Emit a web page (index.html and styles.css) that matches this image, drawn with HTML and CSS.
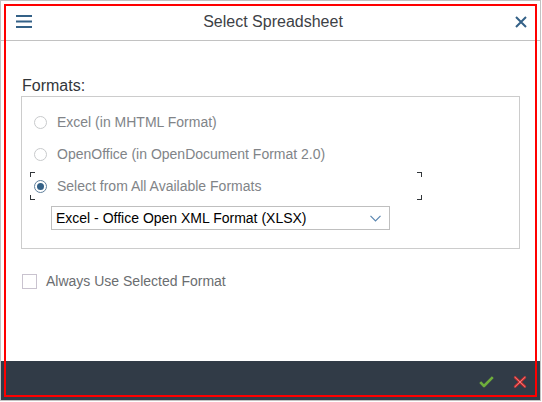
FILE: index.html
```html
<!DOCTYPE html>
<html>
<head>
<meta charset="utf-8">
<link rel="stylesheet" href="styles.css">
</head>
<body>
<div class="dialog">
  <header class="head">
    <button class="icon-btn menu" aria-label="Menu">
      <svg width="16" height="14" viewBox="0 0 16 14"><rect x="0" y="1" width="16" height="2" fill="#346187"/><rect x="0" y="6.5" width="16" height="2" fill="#346187"/><rect x="0" y="12" width="16" height="2" fill="#346187"/></svg>
    </button>
    <h1 class="title">Select Spreadsheet</h1>
    <button class="icon-btn close" aria-label="Close">
      <svg width="12" height="12" viewBox="0 0 12 12"><path d="M1 1L11 11M11 1L1 11" stroke="#346187" stroke-width="2" fill="none"/></svg>
    </button>
  </header>
  <main class="content">
    <div class="label">Formats:</div>
    <div class="group">
      <label class="opt"><span class="radio"></span><span class="opt-text">Excel (in MHTML Format)</span></label>
      <label class="opt"><span class="radio"></span><span class="opt-text">OpenOffice (in OpenDocument Format 2.0)</span></label>
      <label class="opt focus"><span class="radio checked"></span><span class="opt-text">Select from All Available Formats</span></label>
      <div class="select">
        <span class="select-text">Excel - Office Open XML Format (XLSX)</span>
        <svg class="chev" width="11" height="7" viewBox="0 0 11 7"><path d="M0.5 0.8L5.5 5.8L10.5 0.8" stroke="#5a86b0" stroke-width="1.2" fill="none"/></svg>
      </div>
    </div>
    <label class="check"><span class="box"></span><span class="check-text">Always Use Selected Format</span></label>
  </main>
  <footer class="foot">
    <button class="icon-btn ok" aria-label="OK">
      <svg width="15" height="12" viewBox="0 0 15 12"><path d="M1.2 6.2L5 10L13.8 1.2" stroke="#6fae3c" stroke-width="2.6" fill="none" stroke-linejoin="round"/></svg>
    </button>
    <button class="icon-btn cancel" aria-label="Cancel">
      <svg width="14" height="12" viewBox="0 0 14 12"><path d="M1.5 0.8L12.5 11.2M12.5 0.8L1.5 11.2" stroke="#d12a2a" stroke-width="2.6" fill="none"/><path d="M1.5 0.8L12.5 11.2M12.5 0.8L1.5 11.2" stroke="#ffffff" stroke-width="0.6" fill="none" opacity="0.7"/></svg>
    </button>
  </footer>
  <div class="highlight"></div>
</div>
</body>
</html>
```
FILE: styles.css
```css
* { box-sizing: border-box; }
html, body { margin: 0; padding: 0; background: #ffffff; }
body { font-family: "Liberation Sans", Arial, sans-serif; }

.dialog {
  position: relative;
  width: 541px;
  height: 401px;
  border: 1px solid #c2c2c2;
  display: flex;
  flex-direction: column;
  background: #fff;
}

.icon-btn {
  border: 0;
  background: none;
  padding: 0;
  margin: 0;
  display: flex;
  align-items: center;
  justify-content: center;
  cursor: pointer;
}

.head {
  height: 40px;
  border-bottom: 1px solid #c2c2c2;
  display: flex;
  align-items: center;
  padding: 0 12px 0 15px;
  position: relative;
}
.menu { width: 16px; height: 16px; margin-top: 1px; }
.title {
  flex: 1;
  margin: 0;
  text-align: center;
  font-size: 16px;
  font-weight: normal;
  color: #3d4146;
  line-height: 20px;
  margin-top: 2px;
}
.close { width: 14px; height: 14px; margin-top: 3px; }

.content {
  flex: 1;
  padding: 35px 20px 0 20px;
}
.label {
  font-size: 16px;
  line-height: 19px;
  color: #32363a;
  margin-bottom: 1px;
  padding-left: 1px;
}

.group {
  border: 1px solid #cccccc;
  padding: 9px 0 18px 8px;
  display: flex;
  flex-direction: column;
  align-items: flex-start;
}

.opt {
  position: relative;
  display: flex;
  align-items: center;
  width: 392px;
  height: 28px;
  margin: 2px 0;
  padding-left: 4px;
  font-size: 14px;
  color: #818488;
}
.radio {
  width: 13px;
  height: 13px;
  border: 1px solid #c8cacc;
  border-radius: 50%;
  background: #fff;
  margin-right: 10px;
  flex: none;
  position: relative;
}
.radio.checked { border-color: #5f7f9c; }
.radio.checked::after {
  content: "";
  position: absolute;
  left: 2px;
  top: 2px;
  width: 7px;
  height: 7px;
  border-radius: 50%;
  background: #346187;
}
.opt-text { line-height: 16px; }

.focus::before {
  content: "";
  position: absolute;
  inset: 0;
  background:
    linear-gradient(#32363a, #32363a) left top / 5px 1px no-repeat,
    linear-gradient(#32363a, #32363a) left top / 1px 5px no-repeat,
    linear-gradient(#32363a, #32363a) right top / 5px 1px no-repeat,
    linear-gradient(#32363a, #32363a) right top / 1px 5px no-repeat,
    linear-gradient(#32363a, #32363a) left bottom / 5px 1px no-repeat,
    linear-gradient(#32363a, #32363a) left bottom / 1px 5px no-repeat,
    linear-gradient(#32363a, #32363a) right bottom / 5px 1px no-repeat,
    linear-gradient(#32363a, #32363a) right bottom / 1px 5px no-repeat;
}

.select {
  margin: 4px 0 0 21px;
  width: 339px;
  height: 24px;
  border: 1px solid #bfbfbf;
  display: flex;
  align-items: center;
  padding: 0 8px 0 4px;
  font-size: 14px;
  color: #000;
}
.select-text { flex: 1; line-height: 16px; }
.chev { flex: none; margin-top: 1px; }

.check {
  display: flex;
  align-items: center;
  margin-top: 24px;
  padding-left: 1px;
  font-size: 14px;
  color: #6a6d70;
}
.box {
  width: 15px;
  height: 15px;
  border: 1px solid #c9c3cf;
  background: #fff;
  margin-right: 9px;
  flex: none;
}
.check-text { line-height: 16px; }

.foot {
  height: 39px;
  background: #313b47;
  display: flex;
  align-items: center;
  justify-content: flex-end;
  gap: 19px;
  padding: 2px 13px 0 0;
}
.ok { width: 15px; height: 12px; }
.cancel { width: 14px; height: 12px; }

.highlight {
  position: absolute;
  left: 3px;
  top: 3px;
  width: 533px;
  height: 393px;
  border: 2px solid #ff0000;
  pointer-events: none;
}
```
